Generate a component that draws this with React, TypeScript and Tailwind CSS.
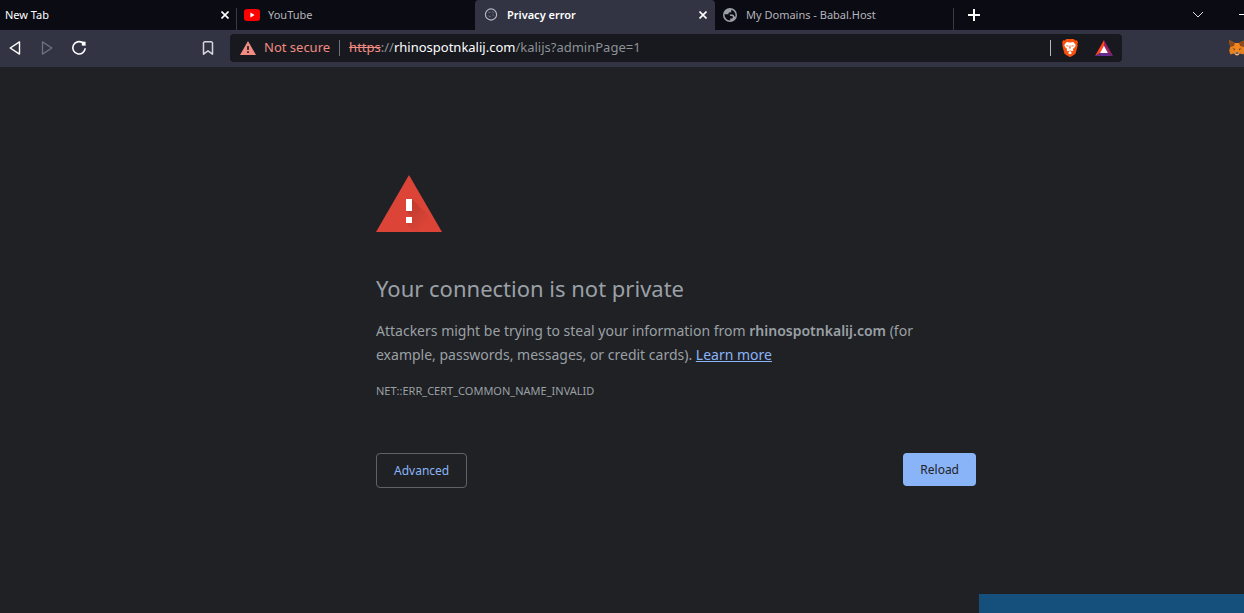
import type { ReactNode } from 'react';
import clsx from 'clsx';

interface TabProps {
  title: string;
  icon?: ReactNode;
  active?: boolean;
  closable?: boolean;
  className?: string;
}

function CloseIcon() {
  return (
    <svg className="h-2 w-2" viewBox="0 0 8 8" fill="none" stroke="currentColor">
      <path strokeWidth={1.6} d="M.5.5l7 7M7.5.5l-7 7" />
    </svg>
  );
}

function YouTubeIcon() {
  return (
    <svg className="h-3 w-4" viewBox="0 0 16 12">
      <rect width="16" height="12" rx="3" fill="#ff0000" />
      <path d="M6.4 3.5v5L10.6 6z" fill="#fff" />
    </svg>
  );
}

function LoadingIcon() {
  return (
    <svg className="h-3.5 w-3.5" viewBox="0 0 14 14" fill="none">
      <circle cx="7" cy="6.5" r="5.6" stroke="#b9bbc4" strokeWidth="1.1" />
      <path
        d="M4.5 4.3h2M8 3.7l1.6.8M4.6 7.9c1 .8 1.8.4 2.2 1M8.4 7.1h1.4"
        stroke="#73767f"
      />
    </svg>
  );
}

function GlobeIcon() {
  return (
    <svg className="h-3.5 w-3.5" viewBox="0 0 14 14">
      <circle cx="7" cy="7" r="7" fill="#9aa0a6" />
      <path
        d="M1.5 6.3h3.700c1.300 0 1.900.5 1.900 1.700h1.400c1 0 1.300.5 1.300 1.300s-.5 1.200-1.300 1.200H7.200v1.900C4.100 12.500 1.500 10 1.500 6.300zM8.300 1.700c2.500.6 4.200 2.700 4.200 5.300 0 .8-.1 1.300-.4 1.900-.6-.4-1-.8-1.200-1.500-.2-.6-.8-.8-1.500-.8H6.700c-.9 0-1.300-.4-1.300-1.100s.4-1.100 1.300-1.100h.5c.8 0 1.100-.5 1.100-1.200z"
        fill="#0b0b14"
      />
    </svg>
  );
}

function Tab({ title, icon, active, closable, className }: TabProps) {
  return (
    <div
      className={clsx(
        'flex h-full shrink-0 items-center text-[11px]',
        active ? 'rounded-t bg-[#323443]' : 'bg-[#0b0b14]',
        className,
      )}
    >
      {icon && <span className="mr-2 flex w-4 justify-center">{icon}</span>}
      <button type="button" className="grow truncate text-left">
        {title}
      </button>
      {closable && (
        <button
          type="button"
          aria-label={`Close ${title}`}
          className="flex h-4 w-4 items-center justify-center text-white"
        >
          <CloseIcon />
        </button>
      )}
    </div>
  );
}

function TabSeparator() {
  return <div className="mt-2 w-px shrink-0 self-stretch bg-[#3a3a42]" />;
}

function TabStrip() {
  return (
    <div className="flex h-[30px] items-center overflow-hidden bg-[#0b0b14]">
      <Tab title="New Tab" closable className="w-[236px] pr-[3px] pl-[5px] text-white" />
      <TabSeparator />
      <Tab
        title="YouTube"
        icon={<YouTubeIcon />}
        className="w-[238px] pl-[7px] text-[#b4b5b9]"
      />
      <Tab
        title="Privacy error"
        icon={<LoadingIcon />}
        active
        closable
        className="w-[240px] pr-1 pl-2 font-semibold text-white"
      />
      <Tab
        title="My Domains - Babal.Host"
        icon={<GlobeIcon />}
        className="w-[238px] pl-[7px] text-[#b4b5b9]"
      />
      <TabSeparator />
      <button type="button" aria-label="New tab" className="ml-3.5 text-white">
        <svg className="h-3 w-3" viewBox="0 0 12 12" stroke="currentColor">
          <path strokeWidth={2} d="M6 0v12M0 6h12" />
        </svg>
      </button>
      <button
        type="button"
        aria-label="Search tabs"
        className="mr-9 ml-auto text-[#dcdce0]"
      >
        <svg className="h-2.5 w-2.5" viewBox="0 0 10 10" fill="none" stroke="currentColor">
          <path d="M0 2l5 5 5-5" />
        </svg>
      </button>
      <button type="button" aria-label="Minimize" className="text-white">
        <svg className="h-2.5 w-[5px]" viewBox="0 0 5 10" stroke="currentColor">
          <path d="M0 4.5h5" />
        </svg>
      </button>
    </div>
  );
}

function ShieldIcon() {
  return (
    <svg className="h-[18px] w-4" viewBox="0 0 16 18">
      <path
        d="M4.2 0h7.600l1.300 1.400 1.700-.1 1.200 2.300-.6 1.200.3 1.600-1.900 7.400c-.3 1-.9 1.500-1.600 2L8.700 17.800a1.300 1.300 0 01-1.400 0l-3.500-2c-.7-.5-1.300-1-1.600-2L.3 6.400l.3-1.600L0 3.600l1.200-2.300 1.700.1z"
        fill="#fb4f0c"
      />
      <path
        d="M4.700 2.900L8 3.400l3.300-.5 2.300 2.900-.5 1.900-2.200 2.400.4 1.300-1 .9-1-.4-.8.700L10 14l-2 1.500L6 14l1.500-1.400-.8-.7-1 .4-1-.9.4-1.300-2.200-2.400-.5-1.900z"
        fill="#fff"
      />
      <path
        d="M4.200 6.300l2.500.4-.4.700-1.600-.2zM11.800 6.300l-2.500.4.4.7 1.600-.2zM7.600 6.500h.8l.3 2.600-.7 1-.7-1zM6.300 10.500L8 11.400l1.700-.9L8 12.100z"
        fill="#fb4f0c"
      />
    </svg>
  );
}

function RewardsIcon() {
  return (
    <svg className="h-4 w-[18px]" viewBox="0 0 18 16">
      <path d="M9 0L0 16l5.700-3.300L9 6.200z" fill="#ff4724" />
      <path d="M9 0l9 16-5.700-3.300L9 6.200z" fill="#9e1f63" />
      <path d="M0 16h18l-5.700-3.300H5.700z" fill="#662d91" />
      <path d="M9 5.800l3.900 7.200H5.100z" fill="#fff" />
    </svg>
  );
}

function FoxIcon() {
  return (
    <svg className="h-4 w-[15px]" viewBox="0 0 15 16">
      <path d="M0 0l6 3h4l6-3v7l-.5 4-1 3.500-3.500-1-2 2H7l-2-2-3.700 1L.2 10.500 1.200 7z" fill="#e8821e" />
      <path d="M0 0l6 3-1 3-3.800 1zM16 0l-6 3 1 3 4 1z" fill="#8d4a1c" />
      <path d="M6 3h4l.8 5L9.500 12h-3L5.200 8z" fill="#f6851b" />
      <path d="M3.500 8.600l2.300.2.300 1.400zM12.500 8.600l-2.300.2-.3 1.400z" fill="#2f343b" />
      <path d="M5.500 12.500h5L9.300 15H6.700z" fill="#d7c1b3" />
      <path d="M6.500 12.500h3v1.200h-3z" fill="#2f343b" />
    </svg>
  );
}

function Toolbar() {
  return (
    <div className="flex h-[37px] items-center overflow-hidden bg-[#323443] pb-px pl-2">
      <button type="button" aria-label="Back" className="text-white">
        <svg className="h-4 w-4" viewBox="0 0 16 16" fill="none" stroke="currentColor">
          <path strokeWidth={1.4} strokeLinejoin="round" d="M11.5 1.9v12.2L2.2 8z" />
        </svg>
      </button>
      <button type="button" aria-label="Forward" disabled className="ml-4 text-[#6d6f7a]">
        <svg className="h-4 w-4" viewBox="0 0 16 16" fill="none" stroke="currentColor">
          <path strokeWidth={1.4} strokeLinejoin="round" d="M2.5 1.9v12.2L11.8 8z" />
        </svg>
      </button>
      <button type="button" aria-label="Reload page" className="ml-[15px] text-white">
        <svg className="h-4 w-4" viewBox="0 0 16 16" fill="none" stroke="currentColor">
          <path strokeWidth={1.6} d="M11.5 2.7A6.2 6.2 0 1014.2 8.3" />
          <path d="M10.8 1.5l3.8.2v4l-3.8-.3z" fill="currentColor" stroke="none" />
        </svg>
      </button>
      <button type="button" aria-label="Bookmark this tab" className="ml-[115px] text-[#d5d6da]">
        <svg className="h-4 w-3" viewBox="0 0 12 16" fill="none" stroke="currentColor">
          <path strokeWidth={1.5} strokeLinejoin="round" d="M2.5 1.8h7l1 1v11.400L6 10.800l-4.500 3.400V2.800z" />
        </svg>
      </button>

      {/* Address bar */}
      <div className="ml-4 flex h-7 grow items-center rounded bg-[#17191f] pr-[9px] pl-2.5 text-[13px]">
        <button type="button" className="flex items-center gap-2 text-[#f28b82]">
          <svg className="h-3.5 w-4" viewBox="0 0 16 14">
            <path d="M8 0l8 14H0z" fill="currentColor" />
            <path d="M7.2 5h1.6v4H7.2zM7.2 10.300h1.600v1.700H7.200z" fill="#17191f" />
          </svg>
          Not secure
        </button>
        <div className="mx-[9px] h-4 w-px bg-[#6f7176]" />
        <div className="grow whitespace-nowrap text-[#8d9196]">
          <span className="text-[#f28b82] line-through">https</span>://
          <span className="text-white">rhinospotnkalij.com</span>
          /kalijs?adminPage=1
        </div>
        <div className="mr-[11px] h-4 w-px bg-[#b8b9bd]" />
        <button type="button" aria-label="Brave Shields" className="mr-[17px]">
          <ShieldIcon />
        </button>
        <button type="button" aria-label="Brave Rewards">
          <RewardsIcon />
        </button>
      </div>

      <button type="button" aria-label="MetaMask" className="ml-[107px]">
        <FoxIcon />
      </button>
    </div>
  );
}

function WarningIcon() {
  return (
    <svg className="h-[57px] w-[66px]" viewBox="0 0 66 57">
      <defs>
        <linearGradient id="warning-shadow" x1="0" y1="0" x2="1" y2="1">
          <stop offset="0" stopColor="#b8382d" />
          <stop offset="0.7" stopColor="#db4437" />
        </linearGradient>
      </defs>
      <path d="M33 0l33 57H0z" fill="#db4437" />
      <path d="M36 24l18 18 8 15H39l-9-9 6-6-6-6z" fill="url(#warning-shadow)" />
      <path d="M30 24h6v12h-6zM30 42h6v6h-6z" fill="#fff" />
    </svg>
  );
}

function PrivacyError() {
  return (
    <main className="grow pt-[108px] pl-[108px]">
      <div className="mx-auto max-w-[600px] text-[#9aa0a6]">
        <WarningIcon />
        <h1 className="mt-10 text-[22px] leading-8">Your connection is not private</h1>
        <p className="mt-[15px] text-sm leading-6">
          Attackers might be trying to steal your information from{' '}
          <strong className="font-semibold">rhinospotnkalij.com</strong> (for example,
          passwords, messages, or credit cards).{' '}
          <a href="#learn-more" className="text-[#8ab4f8] underline">
            Learn more
          </a>
        </p>
        <div className="mt-3.5 text-[11px] leading-5">NET::ERR_CERT_COMMON_NAME_INVALID</div>
        <div className="mt-13 flex items-start justify-between text-xs">
          <button
            type="button"
            className="h-[35px] rounded border border-[#5f6368] px-[17px] pt-px text-[#8ab4f8]"
          >
            Advanced
          </button>
          <button
            type="button"
            className="h-[33px] rounded bg-[#8ab4f8] px-[17px] pt-px text-[#202124]"
          >
            Reload
          </button>
        </div>
      </div>
    </main>
  );
}

export default function App() {
  return (
    <div className="relative flex min-h-screen flex-col bg-[#202124] font-['Noto_Sans','Open_Sans',sans-serif]">
      <TabStrip />
      <Toolbar />
      <PrivacyError />
      <div className="absolute right-0 bottom-0 h-[19px] w-[265px] bg-[#15507d]" />
    </div>
  );
}
